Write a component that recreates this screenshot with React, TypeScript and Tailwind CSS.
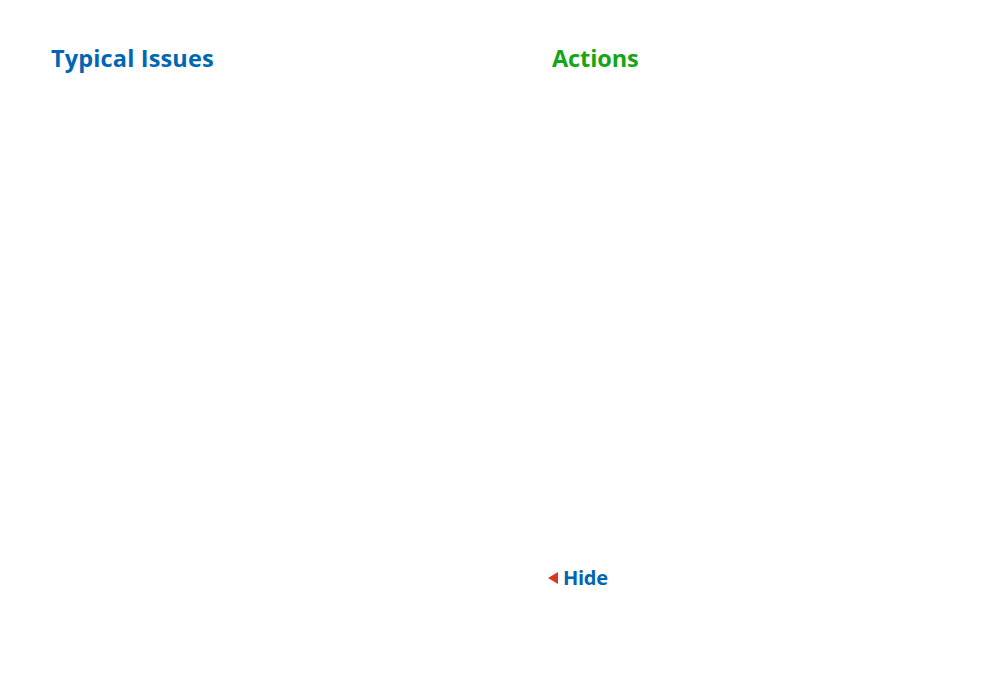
import React from "react";

export default function App() {
  return (
    <div className="w-[1004px] h-[685px] bg-white" style={{ fontFamily: '"Open Sans", "Liberation Sans", sans-serif' }}>
      <div className="grid grid-cols-[501px_1fr] pl-[51px] pt-[42px]">
        <h2 className="text-[23.5px] font-bold tracking-[0.15px] text-[#0066b3] leading-[32px]">Typical Issues</h2>
        <h2 className="text-[23.5px] font-bold tracking-[-0.1px] text-[#14a614] leading-[32px]">Actions</h2>
      </div>
      <div className="pl-[548px] pt-[490px] flex items-center gap-[4px]">
        <svg width="11" height="12" viewBox="0 0 11 12"><polygon points="0,6 10,0 10,12" fill="#d6391f" /></svg>
        <span className="text-[20px] font-bold tracking-[-0.3px] text-[#0066b3] leading-[28px]">Hide</span>
      </div>
    </div>
  );
}
